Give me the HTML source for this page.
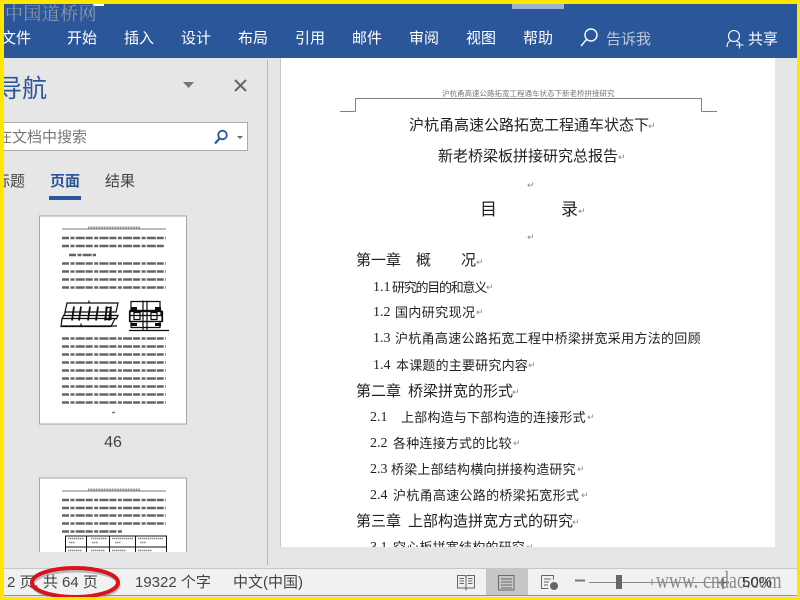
<!DOCTYPE html>
<html lang="zh">
<head>
<meta charset="utf-8">
<title>导航</title>
<style>
html,body{margin:0;padding:0;width:800px;height:600px;overflow:hidden;background:#e6e6e6}
#r{position:relative;width:800px;height:600px;overflow:hidden;font-family:"Liberation Sans","Noto Sans CJK SC",sans-serif}
.b{position:absolute;display:block}
.t{position:absolute;white-space:nowrap;line-height:20px;height:20px}
.w{color:#fff;font-size:15px;top:29px}
.d{color:#222;font-size:14px;font-family:"Liberation Serif","WenQuanYi Zen Hei",sans-serif}
.m{position:absolute;color:#888;font-size:9px;line-height:10px;font-family:"DejaVu Sans",sans-serif}
.s{color:#444;font-size:15px;top:573px}
#doc{position:absolute;left:281px;top:58px;width:494px;height:489px;background:#fff;overflow:hidden}
</style>
</head>
<body>
<div id="r">
<!-- ribbon -->
<div class="b" style="left:0;top:0;width:800px;height:58px;background:#2b579a"></div>
<div class="b" style="left:93px;top:3px;width:11px;height:3px;background:#fff"></div>
<div class="b" style="left:512px;top:3px;width:52px;height:6px;background:#9db2d0"></div>
<span class="t" style="left:5px;top:3px;font-size:18px;letter-spacing:.4px;color:#8c97a8;font-family:'Noto Serif CJK SC',serif">中国道桥网</span>
<span class="t w" style="left:1px">文件</span>
<span class="t w" style="left:67px">开始</span>
<span class="t w" style="left:124px">插入</span>
<span class="t w" style="left:181px">设计</span>
<span class="t w" style="left:238px">布局</span>
<span class="t w" style="left:295px">引用</span>
<span class="t w" style="left:352px">邮件</span>
<span class="t w" style="left:409px">审阅</span>
<span class="t w" style="left:466px">视图</span>
<span class="t w" style="left:523px">帮助</span>
<span class="t w" style="left:606px;top:30px;color:#b9c8de">告诉我</span>
<span class="t w" style="left:748px;top:30px">共享</span>
<svg class="b" style="left:0;top:0" width="800" height="60" fill="none">
<circle cx="591" cy="35" r="6" stroke="#fff" stroke-width="1.4"/>
<path d="M586.5 39.5L581 46" stroke="#fff" stroke-width="1.4"/>
<circle cx="734" cy="36" r="5.5" stroke="#fff" stroke-width="1.1"/>
<path d="M727 47c0-4 2-6 4-6.500M737 41.500l2 1" stroke="#fff" stroke-width="1.1"/>
<path d="M739.500 42v6.500M736 45h7.500" stroke="#fff" stroke-width="1.1"/>
</svg>

<!-- nav pane -->
<div class="b" style="left:267px;top:60px;width:1px;height:505px;background:#b5b5b5"></div>
<div class="b" style="left:280px;top:58px;width:1px;height:489px;background:#c6c6c6"></div>
<span class="t" style="left:-3px;top:79px;font-size:25px;color:#2b579a">导航</span>
<svg class="b" style="left:170px;top:70px" width="90" height="30" fill="none">
<path d="M13 12h11l-5.500 6z" fill="#777"/>
<path d="M65 10l11 11M76 10l-11 11" stroke="#666" stroke-width="2"/>
</svg>
<div class="b" style="left:0;top:122px;width:246px;height:27px;background:#fff;border:1px solid #ababab;box-sizing:content-box"></div>
<span class="t" style="left:-3px;top:128px;font-size:15px;color:#777">在文档中搜索</span>
<svg class="b" style="left:210px;top:125px" width="36" height="24" fill="none">
<circle cx="12.500" cy="10" r="4.300" stroke="#2b579a" stroke-width="1.800"/>
<path d="M9.500 13.500L5 18.500" stroke="#2b579a" stroke-width="2.200"/>
<path d="M27 11h6l-3 3z" fill="#666"/>
</svg>
<span class="t" style="left:-5px;top:172px;font-size:15px;color:#444">标题</span>
<span class="t" style="left:50px;top:172px;font-size:15px;color:#2b579a;font-weight:bold">页面</span>
<span class="t" style="left:105px;top:172px;font-size:15px;color:#444">结果</span>
<div class="b" style="left:49px;top:196px;width:32px;height:4px;background:#2b579a"></div>

<!-- thumbnails -->
<svg class="b" style="left:0;top:200px" width="267" height="352" viewBox="0 200 267 351" fill="none">
<defs><filter id="f" x="-5%" y="-5%" width="110%" height="110%"><feGaussianBlur stdDeviation=".35"/></filter></defs>
<rect x="39.500" y="215.500" width="147" height="208" fill="#fff" stroke="#a6a6a6"/>
<path d="M62 228.500h104" stroke="#777"/>
<path d="M88 227h52" stroke="#888" stroke-width="2" stroke-dasharray="1 .6"/>
<g stroke="#666" stroke-width="2.600" stroke-dasharray="7 1.500 4 1.200 9 1" filter="url(#f)">
<path d="M62 237.500h104M62 245.500h102M69 254.500h27M62 263h104M62 271h104M62 279h104M62 287h104"/>
<path d="M62 338h104M62 346h104M62 354h104M62 362h104M62 370h104M62 378h104M62 386h104M62 394h104M62 402h104"/>
</g>
<path d="M112 412h3" stroke="#777" stroke-width="1.500"/>
<g stroke="#111" stroke-width="1.200" filter="url(#f)">
<path d="M67 302.500h51l-2 9H65zM66 311l-4 7M62 318h55M64 315h54l-2 4M62 318l-1 8h50l4-8M62 325.500h55"/>
<path d="M74 306l-2 14M81 306l-2 14M90 306l-2 14M98 306l-2 14M107 306l-2 14M111 306l-2 14" stroke-width="1.800"/>
<path d="M106 307h5v12h-5z"/>
<path d="M89 300v3M81 323v3"/>
<path d="M130 310h31v5h-31zM130 311h32v10h-32zM129.500 311h33v10h-33z"/>
<path d="M131 301h29v9h-29zM131 321h29v6h-29zM129 330h40M143 300v30M147 300v30"/>
<rect x="134" y="312" width="6" height="7"/>
<rect x="151" y="312" width="6" height="7"/>
<path d="M131 308h6M155 308h6" stroke-width="3"/>
<path d="M131 324h6M155 324h6" stroke-width="3"/>
</g>
<text x="113" y="446.500" text-anchor="middle" font-size="16" font-family="Liberation Sans" fill="#444">46</text>
<rect x="39.500" y="477.500" width="147" height="90" fill="#fff" stroke="#a6a6a6"/>
<path d="M62 490.500h104" stroke="#777"/>
<path d="M88 489h52" stroke="#888" stroke-width="2" stroke-dasharray="1 .6"/>
<g stroke="#666" stroke-width="2.600" stroke-dasharray="7 1.500 4 1.200 9 1" filter="url(#f)">
<path d="M62 499.500h104M62 507.500h104M62 515h104M62 523h104M62 531h60"/>
</g>
<g stroke="#111">
<path d="M65.500 535.500h101M65.500 546.500h101M65.500 535v17M86.500 535v17M109.500 535v17M135.500 535v17M166.500 535v17"/>
</g>
<path d="M68 538h16M91 538h16M112 538h21M138 538h25M69 542h6M92 542h6M115 542h6M140 542h6M68 550h14M91 550h14M112 550h14M138 550h14" stroke="#888" stroke-width="1.500" stroke-dasharray="1.500 .5"/>
</svg>

<!-- document -->
<div id="doc">
<svg class="b" style="left:0;top:0" width="494" height="60" fill="none" stroke="#808080">
<path d="M74.500 53.500V40.500H420.500V53.500M59 53.500H74.500M420.500 53.500H436"/>
</svg>
</div>
<div class="b" style="left:281px;top:58px;width:494px;height:489px;overflow:hidden">
<div class="b" style="left:-281px;top:-57px;width:800px;height:600px">
<span class="t" style="left:442px;top:83px;font-size:7.500px;color:#777">沪杭甬高速公路拓宽工程通车状态下新老桥拼接研究</span>
<span class="t d" style="left:409px;top:115px;font-size:15px">沪杭甬高速公路拓宽工程通车状态下</span><span class="m" style="left:648px;top:121px">↵</span>
<span class="t d" style="left:438px;top:146px;font-size:15px">新老桥梁板拼接研究总报告</span><span class="m" style="left:618px;top:152px">↵</span>
<span class="m" style="left:527px;top:180px">↵</span>
<span class="t d" style="left:480px;top:199px;font-size:17px">目</span>
<span class="t d" style="left:561px;top:199px;font-size:17px">录</span><span class="m" style="left:578px;top:206px">↵</span>
<span class="m" style="left:527px;top:232px">↵</span>

<span class="t d" style="left:356px;top:250px;font-size:15px">第一章</span>
<span class="t d" style="left:416px;top:250px;font-size:15px">概</span>
<span class="t d" style="left:461px;top:250px;font-size:15px">况</span><span class="m" style="left:476px;top:257px">↵</span>

<span class="t d" style="left:373px;top:277px">1.1</span>
<span class="t d" style="left:392px;top:277px;font-size:13px;letter-spacing:-1.250px">研究的目的和意义</span><span class="m" style="left:486px;top:282px">↵</span>

<span class="t d" style="left:373px;top:302px">1.2</span>
<span class="t d" style="left:395px;top:302px;font-size:13px;letter-spacing:.400px">国内研究现况</span><span class="m" style="left:476px;top:307px">↵</span>

<span class="t d" style="left:373px;top:328px">1.3</span>
<span class="t d" style="left:395px;top:328px;font-size:13px;letter-spacing:.300px">沪杭甬高速公路拓宽工程中桥梁拼宽采用方法的回顾</span>

<span class="t d" style="left:373px;top:355px">1.4</span>
<span class="t d" style="left:396px;top:355px;font-size:13px;letter-spacing:.200px">本课题的主要研究内容</span><span class="m" style="left:528px;top:360px">↵</span>

<span class="t d" style="left:356px;top:381px;font-size:15px">第二章</span>
<span class="t d" style="left:408px;top:381px;font-size:15px">桥梁拼宽的形式</span><span class="m" style="left:512px;top:387px">↵</span>

<span class="t d" style="left:370px;top:407px">2.1</span>
<span class="t d" style="left:401px;top:407px;font-size:13px;letter-spacing:.200px">上部构造与下部构造的连接形式</span><span class="m" style="left:587px;top:412px">↵</span>

<span class="t d" style="left:370px;top:433px">2.2</span>
<span class="t d" style="left:393px;top:433px;font-size:13px;letter-spacing:.200px">各种连接方式的比较</span><span class="m" style="left:513px;top:438px">↵</span>

<span class="t d" style="left:370px;top:459px">2.3</span>
<span class="t d" style="left:391px;top:459px;font-size:13px;letter-spacing:.200px">桥梁上部结构横向拼接构造研究</span><span class="m" style="left:577px;top:464px">↵</span>

<span class="t d" style="left:370px;top:485px">2.4</span>
<span class="t d" style="left:393px;top:485px;font-size:13px;letter-spacing:.300px">沪杭甬高速公路的桥梁拓宽形式</span><span class="m" style="left:581px;top:490px">↵</span>

<span class="t d" style="left:356px;top:511px;font-size:15px">第三章</span>
<span class="t d" style="left:408px;top:511px;font-size:15px">上部构造拼宽方式的研究</span><span class="m" style="left:572px;top:517px">↵</span>

<span class="t d" style="left:370px;top:537px">3.1</span>
<span class="t d" style="left:393px;top:537px;font-size:13px;letter-spacing:.200px">空心板拼宽结构的研究</span><span class="m" style="left:526px;top:542px">↵</span>
</div>
</div>

<!-- status bar -->
<div class="b" style="left:0;top:568px;width:800px;height:28px;background:#f1f1f1;border-top:1px solid #c6c6c6;box-sizing:border-box"></div>
<div class="b" style="left:486px;top:569px;width:42px;height:27px;background:#c6c6c6"></div>
<div class="b" style="left:0;top:595px;width:800px;height:1px;background:#8f8f8f"></div>
<span class="t s" style="left:7px">2 页, 共 64 页</span>
<span class="t s" style="left:135px">19322 个字</span>
<span class="t s" style="left:233px">中文(中国)</span>
<svg class="b" style="left:0;top:560px" width="130" height="40" fill="none">
<ellipse cx="76" cy="25" rx="43" ry="14" stroke="#777" stroke-width="3" opacity=".45"/>
<ellipse cx="75" cy="22.500" rx="43" ry="14.500" stroke="#d8141a" stroke-width="4"/>
</svg>
<svg class="b" style="left:450px;top:568px" width="350" height="30" fill="none" stroke="#666">
<path d="M7.500 7.500h7.500l1 1 1-1h7.500V20h-8l-.5 1.500-.5-1.500h-8zM16 8.500V20M9.500 10.500h4.500M9.500 13h4.500M9.500 15.500h4.500M18 10.500h4.500M18 13h4.500M18 15.500h4.500"/>
<path d="M48.500 7.500h15.500V22H48.500zM51 11h11M51 14h11M51 17h11M51 20h11" stroke="#6a6a6a"/>
<path d="M91.500 7.500h12v4M91.500 7.500V20.500h7M94 11h7M94 14h5M94 17h4"/>
<circle cx="104" cy="18" r="4" fill="#666" stroke="none"/>
<path d="M125 12.500h10" stroke="#777" stroke-width="2"/>
<path d="M139 14.500h131" stroke="#888"/>
<rect x="166" y="7" width="6" height="14" fill="#666" stroke="none"/>
<path d="M202 11v6" stroke="#888"/>
<path d="M273 9v12M267 14.500h12" stroke="#666" stroke-width="1.500"/>
</svg>
<span class="t" style="left:656px;top:571px;font-size:24px;color:#8a8a8a;font-family:'Liberation Serif',serif;transform-origin:0 50%;transform:scaleX(.74);letter-spacing:.2px">www. cndao.com</span>
<span class="t" style="left:742px;top:573px;font-size:15px;color:#333">50%</span>

<!-- yellow frame -->
<div class="b" style="left:0;top:0;width:800px;height:4px;background:#ffe600"></div>
<div class="b" style="left:0;top:0;width:4px;height:600px;background:#ffe600"></div>
<div class="b" style="left:797px;top:0;width:3px;height:600px;background:#ffe600"></div>
<div class="b" style="left:0;top:597px;width:800px;height:3px;background:#ffe600"></div>
</div>
</body>
</html>
